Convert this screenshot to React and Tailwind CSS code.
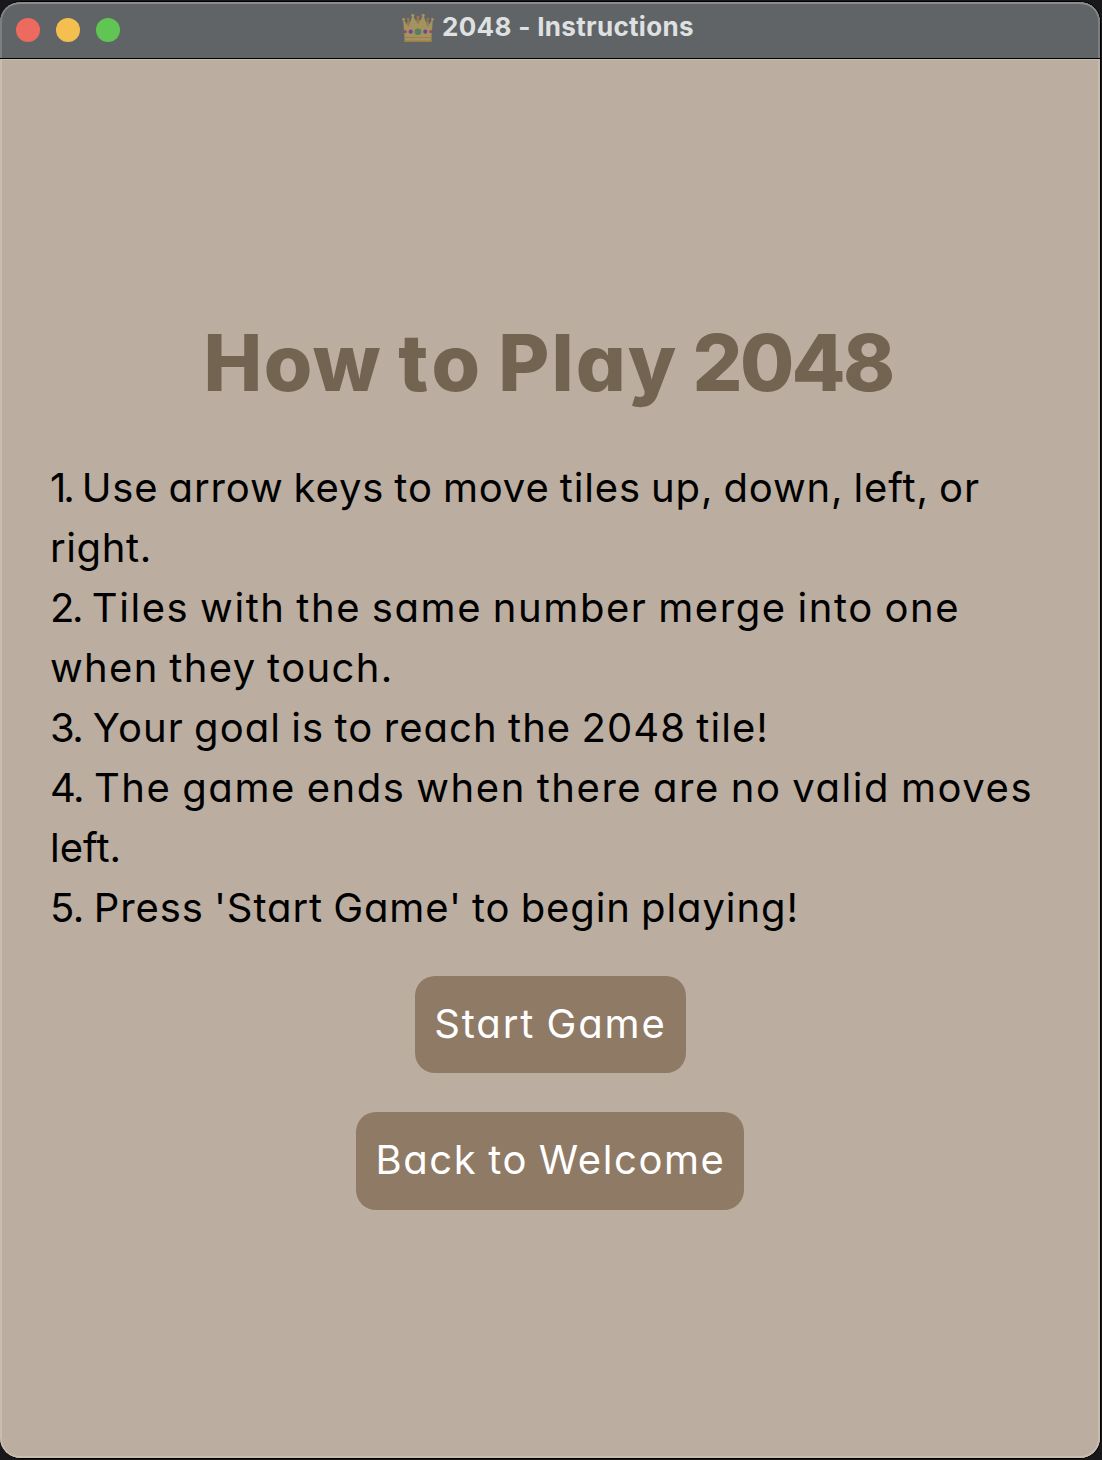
const STEPS = [
  { num: '1.', text: 'Use arrow keys to move tiles up, down, left, or', spacing: 'tracking-[0.866px]', numSpacing: 'tracking-[-3.13px]' },
  { text: 'right.', spacing: 'tracking-[0.6px]' },
  { num: '2.', text: 'Tiles with the same number merge into one', spacing: 'tracking-[1.56px]', numSpacing: 'tracking-[-2.44px]' },
  { text: 'when they touch.', spacing: 'tracking-[1.35px]' },
  { num: '3.', text: 'Your goal is to reach the 2048 tile!', spacing: 'tracking-[1.06px]', numSpacing: 'tracking-[-1.44px]' },
  { num: '4.', text: 'The game ends when there are no valid moves', spacing: 'tracking-[1.56px]', numSpacing: 'tracking-[-1.44px]' },
  { text: 'left.', spacing: 'tracking-[0px]' },
  { num: '5.', text: "Press 'Start Game' to begin playing!", spacing: 'tracking-[0.91px]', numSpacing: 'tracking-[-0.59px]' },
];

function Crown() {
  return (
    <svg className="h-[30px] w-[34px]" viewBox="0 0 34 30">
      <g fill="#9c7650">
        <path d="M4 18 6.800 7h1L12 14l4.500-9h1L22 14l4.200-7h1L30 18Z" />
        <circle cx="7.200" cy="6" r="1.300" />
        <circle cx="17" cy="4.200" r="1.500" />
        <circle cx="26.800" cy="6" r="1.300" />
      </g>
      <path d="M3.500 29V24L2.200 7.500h1L7.600 14 11.200 3h1L17 11.500 21.800 3h1L26.400 14 30.800 7.500h1L30.500 24v5Z" fill="#a3935f" />
      <circle cx="2.600" cy="6.500" r="1.400" fill="#a3935f" />
      <circle cx="11.800" cy="2.400" r="1.600" fill="#a3935f" />
      <circle cx="22.200" cy="2.400" r="1.600" fill="#a3935f" />
      <circle cx="31.400" cy="6.500" r="1.400" fill="#a3935f" />
      <path d="M3.500 24h27v1h-27ZM3.500 27.500h27V29h-27Z" fill="#9f7e4c" />
      <circle cx="17" cy="18.700" r="3.300" fill="#5c7c5b" />
      <circle cx="9.700" cy="18.700" r="2.100" fill="#6b45a5" />
      <circle cx="24.300" cy="18.700" r="2.100" fill="#6b45a5" />
      <circle cx="4.200" cy="18.700" r="1.600" fill="#9c4a5d" />
      <circle cx="29.800" cy="18.700" r="1.600" fill="#9c4a5d" />
    </svg>
  );
}

export default function App() {
  return (
    <div className="h-[1460px] w-[1102px] bg-[#18181a] pt-[1px] font-['Inter',sans-serif]">
      <div className="flex h-[1458px] w-[1101px] flex-col overflow-hidden rounded-[21px] border-t border-r border-b border-black bg-[#bbad9f]">
        <header className="flex h-[57px] shrink-0 rounded-t-[20px] border-b border-black bg-[#606466] shadow-[inset_0_2px_0_#8a8c8d,inset_2px_0_0_#7c7f80,inset_-2px_0_0_#7c7f80]">
          <div className="flex w-[401px] gap-4 pt-4 pl-4">
            <span className="size-6 rounded-full bg-[#ed6a5e]" />
            <span className="size-6 rounded-full bg-[#f5bf4f]" />
            <span className="size-6 rounded-full bg-[#61c554]" />
          </div>
          <div className="flex pt-[11px]">
            <Crown />
            <h2 className="ml-[7px] text-[26px] leading-[28px] font-bold tracking-[0.32px] whitespace-nowrap text-[#dfe0e1]">2048 - Instructions</h2>
          </div>
        </header>
        <main className="flex flex-1 flex-col items-center rounded-b-[20px] pt-[244px] shadow-[inset_2px_0_0_#c9bdb2,inset_-2px_0_0_#c9bdb2,inset_0_-2px_0_#c9bdb2,inset_0_1px_0_#c9bdb2] [font-feature-settings:'cv11']">
          <h1 className="-ml-1 text-[78.5px] leading-[120px] font-extrabold whitespace-nowrap text-[#736452] [word-spacing:-3px]">
            <span className="mr-[2px] tracking-[1.5px]">How</span> <span className="tracking-[4px]">to</span> <span className="tracking-[2px]">Play</span> <span className="tracking-[-2.6px]">2048</span>
          </h1>
          <div className="mt-[35px] w-full pl-[50px] text-[40px] leading-[60px] whitespace-nowrap text-black [word-spacing:-2px]">
            {STEPS.map((s) => (
              <p key={s.text} className={s.spacing}>
                {s.num && <><span className={s.numSpacing}>{s.num}</span>{' '}</>}
                {s.text}
              </p>
            ))}
          </div>
          <button className="mt-[38px] flex h-[97px] w-[271px] items-center justify-center rounded-[20px] bg-[#8f7a66] pb-px pl-px text-[40px] tracking-[1.9px] whitespace-nowrap text-white [word-spacing:-2px]">Start Game</button>
          <button className="mt-[39px] flex h-[98px] w-[388px] items-center justify-center rounded-[20px] bg-[#8f7a66] pb-[2px] pl-px text-[40px] tracking-[1.58px] whitespace-nowrap text-white [word-spacing:-2px]">Back to Welcome</button>
        </main>
      </div>
    </div>
  );
}
